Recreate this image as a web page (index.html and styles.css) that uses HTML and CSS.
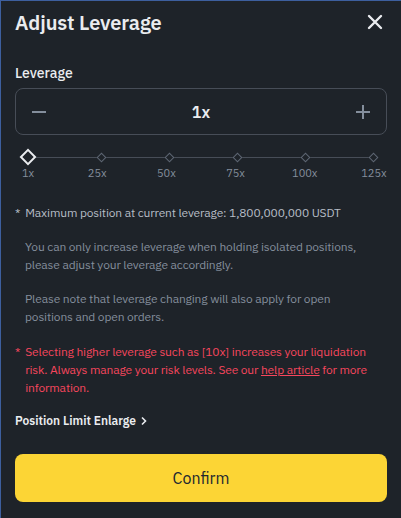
FILE: index.html
```html
<!DOCTYPE html>
<html>
<head>
<meta charset="utf-8">
<link rel="stylesheet" href="styles.css">
</head>
<body>
<div class="modal">
  <div class="header">
    <h1 class="title">Adjust Leverage</h1>
    <svg class="close" width="16" height="16" viewBox="0 0 16 16"><path d="M2 2L14 14M14 2L2 14" stroke="#eaecef" stroke-width="2.4" stroke-linecap="round"/></svg>
  </div>
  <div class="label">Leverage</div>
  <div class="stepper">
    <svg width="18" height="18" viewBox="0 0 18 18"><path d="M2 9H16" stroke="#848e9c" stroke-width="2"/></svg>
    <span class="value">1x</span>
    <svg width="18" height="18" viewBox="0 0 18 18"><path d="M2 9H16M9 2V16" stroke="#848e9c" stroke-width="2"/></svg>
  </div>
  <div class="slider">
    <div class="track">
      <span class="dot big"></span>
      <span class="dot"></span>
      <span class="dot"></span>
      <span class="dot"></span>
      <span class="dot"></span>
      <span class="dot"></span>
    </div>
    <div class="marks">
      <span>1x</span><span>25x</span><span>50x</span><span>75x</span><span>100x</span><span>125x</span>
    </div>
  </div>
  <div class="note"><span class="star">*</span><p class="txt">Maximum position at current leverage: 1,800,000,000 USDT</p></div>
  <p class="para">You can only increase leverage when holding isolated positions, please adjust your leverage accordingly.</p>
  <p class="para">Please note that leverage changing will also apply for open positions and open orders.</p>
  <div class="note warn"><span class="star">*</span><p class="txt">Selecting higher leverage such as [10x] increases your liquidation risk. Always manage your risk levels. See our <u class="link">help article</u> for more information.</p></div>
  <div class="enlarge">Position Limit Enlarge <svg width="8" height="10" viewBox="0 0 8 10"><path d="M2 1.5L5.5 5L2 8.5" stroke="#eaecef" stroke-width="1.6" fill="none"/></svg></div>
  <button class="confirm">Confirm</button>
</div>
</body>
</html>
```
FILE: styles.css
```css
html, body { margin: 0; padding: 0; }
body {
  background: #1e2329;
  font-family: "IBM Plex Sans", Inter, "Noto Sans", sans-serif;
  color: #eaecef;
  width: 401px;
  height: 518px;
  box-sizing: border-box;
  border-left: 1px solid #3d5f9e;
  border-top: 1px solid #3d5f9e;
  overflow: hidden;
}
.modal {
  padding: 0 14px 0 14px;
  display: flex;
  flex-direction: column;
}
.header {
  display: flex;
  justify-content: space-between;
  align-items: center;
  height: 42px;
  padding-right: 4px;
}
.title {
  margin: 0;
  font-size: 20px;
  font-weight: 600;
  letter-spacing: -0.1px;
}
.label {
  margin-top: 21px;
  font-size: 14px;
  font-weight: 500;
  line-height: 18px;
}
.stepper {
  margin-top: 6px;
  height: 45px;
  border: 1px solid #474d57;
  border-radius: 8px;
  display: flex;
  align-items: center;
  justify-content: space-between;
  padding: 0 14px;
}
.value {
  font-size: 16px;
  font-weight: 600;
}
.slider {
  margin-top: 14px;
  padding: 0 13px;
}
.track {
  position: relative;
  height: 16px;
  display: flex;
  justify-content: space-between;
  align-items: center;
}
.track::before {
  content: "";
  position: absolute;
  left: 0; right: 0;
  top: 7.5px;
  height: 1px;
  background: #474d57;
}
.dot {
  position: relative;
  width: 5px;
  height: 5px;
  margin-right: -3px;
  background: #1e2329;
  border: 1px solid #5e6673;
  transform: rotate(45deg);
}
.big {
  width: 8px;
  height: 8px;
  border: 2px solid #eaecef;
  margin-left: -6px;
  margin-right: 0;
}
.marks {
  display: flex;
  justify-content: space-between;
  font-size: 11px;
  color: #848e9c;
  margin-top: 1px;
}
.marks span {
  width: 0;
  display: flex;
  justify-content: center;
  white-space: nowrap;
}
.note {
  display: flex;
  gap: 5px;
  font-size: 12px;
  line-height: 18px;
  letter-spacing: -0.15px;
  color: #b7bdc6;
  margin-top: 24px;
}
.txt { margin: 0; }
.star { flex: none; }
.para {
  margin: 16px 16px 0 10px;
  font-size: 12px;
  line-height: 18px;
  letter-spacing: -0.15px;
  color: #848e9c;
}
.warn {
  color: #f6465d;
  margin-top: 17px;
}
.link {
  text-decoration: underline;
}
.enlarge {
  margin-top: 16px;
  font-size: 12px;
  font-weight: 600;
  display: flex;
  align-items: center;
  gap: 4px;
}
.confirm {
  margin-top: 26px;
  height: 48px;
  border: none;
  border-radius: 8px;
  background: #fcd535;
  color: #202630;
  font-family: inherit;
  font-size: 16px;
  font-weight: 400;
}
```
